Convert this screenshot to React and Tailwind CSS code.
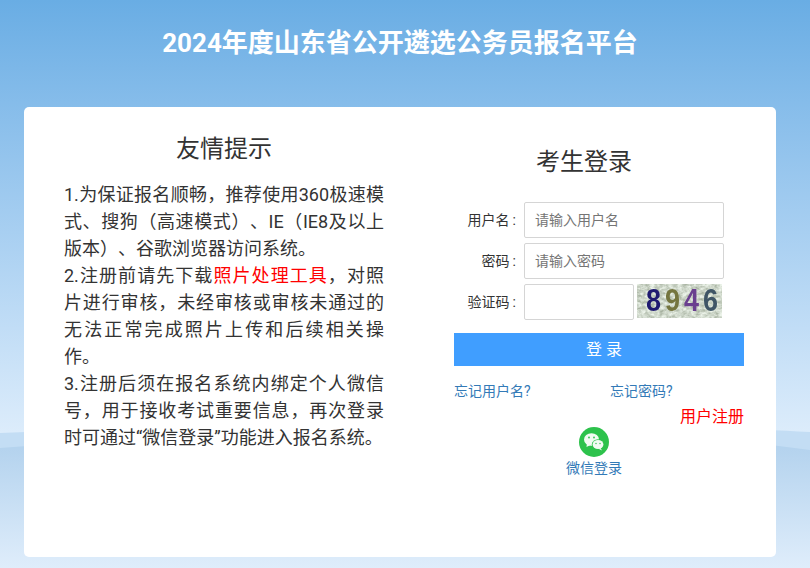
import React from 'react'

const font = { fontFamily: '"Roboto", "Noto Sans CJK SC", sans-serif' }

const Waves = () => (
  <svg className='absolute left-0 top-[425px] w-[810px] h-[143px]' viewBox='0 0 810 143' preserveAspectRatio='none'>
    <defs>
      <linearGradient id='w2' x1='0' y1='0' x2='0' y2='1'>
        <stop offset='0' stopColor='#aecfec' />
        <stop offset='1' stopColor='#dfedfb' />
      </linearGradient>
    </defs>
    <path d='M0 8 C150 2 300 0 420 0 C560 0 700 1 810 7 V143 H0 Z' fill='#c3ddf4' />
    <path d='M0 23 C170 10 320 5 450 5 C600 5 720 12 810 25 V143 H0 Z' fill='url(#w2)' />
  </svg>
)

const WechatIcon = () => (
  <svg width='30' height='30' viewBox='0 0 30 30'>
    <circle cx='15' cy='15' r='15' fill='#2dc24c' />
    <ellipse cx='12.5' cy='12.5' rx='7.5' ry='6.3' fill='#f2fbf3' />
    <path d='M8 16 L7.5 20 L11.5 18 Z' fill='#f2fbf3' />
    <ellipse cx='19' cy='17.5' rx='6.2' ry='5.2' fill='#2dc24c' />
    <ellipse cx='19' cy='17.5' rx='5.4' ry='4.5' fill='#f2fbf3' />
    <path d='M21.5 21 L23 23.5 L19 21.5 Z' fill='#f2fbf3' />
    <circle cx='10' cy='10.5' r='0.9' fill='#2dc24c' />
    <circle cx='15' cy='10.5' r='0.9' fill='#2dc24c' />
    <circle cx='17' cy='16.5' r='0.7' fill='#2dc24c' />
    <circle cx='21' cy='16.5' r='0.7' fill='#2dc24c' />
  </svg>
)

const Captcha = () => (
  <div className='relative w-[85px] h-[34px] ml-[3px] overflow-hidden bg-[#b9c8b4]'>
    <svg className='absolute inset-0' width='85' height='34'>
      <filter id='noise'>
        <feTurbulence type='fractalNoise' baseFrequency='0.22 0.35' numOctaves='3' seed='4' />
        <feColorMatrix values='0 0 0 0 0.84  0 0 0 0 0.9  0 0 0 0 0.82  1.6 0 0 0 -0.2' />
      </filter>
      <rect width='85' height='34' fill='#a3ae9c' />
      <rect width='85' height='34' filter='url(#noise)' />
    </svg>
    <div className='relative flex h-full items-center pl-[9px] gap-[4px] text-[27px] font-bold leading-none scale-y-[1.15] blur-[0.6px]' style={{ fontFamily: '"Liberation Sans", sans-serif' }}>
      <span className='text-[#1f1a70]'>8</span>
      <span className='text-[#74753f]'>9</span>
      <span className='text-[#6a3f8f]'>4</span>
      <span className='text-[#3f5566]'>6</span>
    </div>
  </div>
)

const Field = ({ label, placeholder }) => (
  <div className='flex items-center h-[36px] mb-[5px]'>
    <label className='w-[70px] pr-[8px] text-right text-[14px] text-[#333]'>{label}<span className='ml-[3px]'>:</span></label>
    <input placeholder={placeholder} className='w-[200px] h-[36px] border border-[#d5d5d5] rounded-[2px] px-[10px] text-[14px] placeholder:text-[#757575] outline-none' />
  </div>
)

export default function App() {
  return (
    <div className='relative w-[810px] h-[568px] overflow-hidden bg-gradient-to-b from-[#69ade4] to-[#dcecfb] to-[76%]' style={font}>
      <Waves />
      <div className='relative w-[800px]'>
        <h1 className='pt-[24px] h-[107px] text-center text-[26px] leading-[38px] font-bold text-white'>2024年度山东省公开遴选公务员报名平台</h1>
        <div className='mx-[24px] h-[450px] bg-white rounded-[5px] flex'>
          <div className='w-[320px] ml-[40px] pt-[24px]'>
            <h2 className='text-center text-[24px] leading-[36px] text-[#333] mb-[14px]'>友情提示</h2>
            <div className='text-[18px] leading-[27px] text-[#333] text-justify [text-spacing-trim:space-all]'>
              <p>1.为保证报名顺畅，推荐使用360极速模式、搜狗（高速模式）、IE（IE8及以上版本）、谷歌浏览器访问系统。</p>
              <p>2.注册前请先下载<span className='text-[#ff0000]'>照片处理工具</span>，对照片进行审核，未经审核或审核未通过的无法正常完成照片上传和后续相关操作。</p>
              <p>3.注册后须在报名系统内绑定个人微信号，用于接收考试重要信息，再次登录时可通过“微信登录”功能进入报名系统。</p>
            </div>
          </div>
          <div className='w-[290px] ml-[70px] pt-[37px]'>
            <h2 className='w-[260px] text-center text-[24px] leading-[36px] text-[#333] mb-[22px]'>考生登录</h2>
            <Field label='用户名' placeholder='请输入用户名' />
            <Field label='密码' placeholder='请输入密码' />
            <div className='flex items-start h-[36px]'>
              <label className='w-[70px] pr-[8px] text-right text-[14px] leading-[36px] text-[#333]'>验证码<span className='ml-[3px]'>:</span></label>
              <input className='w-[110px] h-[36px] border border-[#d5d5d5] rounded-[2px] px-[10px] outline-none' />
              <Captcha />
            </div>
            <button className='mt-[13px] w-full h-[33px] pl-[10px] bg-[#409eff] text-white text-[16px]'>登 录</button>
            <div className='flex mt-[15px] text-[14px] leading-[20px] text-[#337ab7]'>
              <a className='w-[156px]'>忘记用户名?</a>
              <a>忘记密码?</a>
            </div>
            <div className='text-right text-[16px] leading-[22px] text-[#ff0000] mt-[5px] mb-[-1px]'>用户注册</div>
            <div className='flex flex-col items-center w-[280px]'>
              <WechatIcon />
              <span className='text-[14px] leading-[20px] text-[#337ab7] mt-[1px]'>微信登录</span>
            </div>
          </div>
        </div>
      </div>
    </div>
  )
}
